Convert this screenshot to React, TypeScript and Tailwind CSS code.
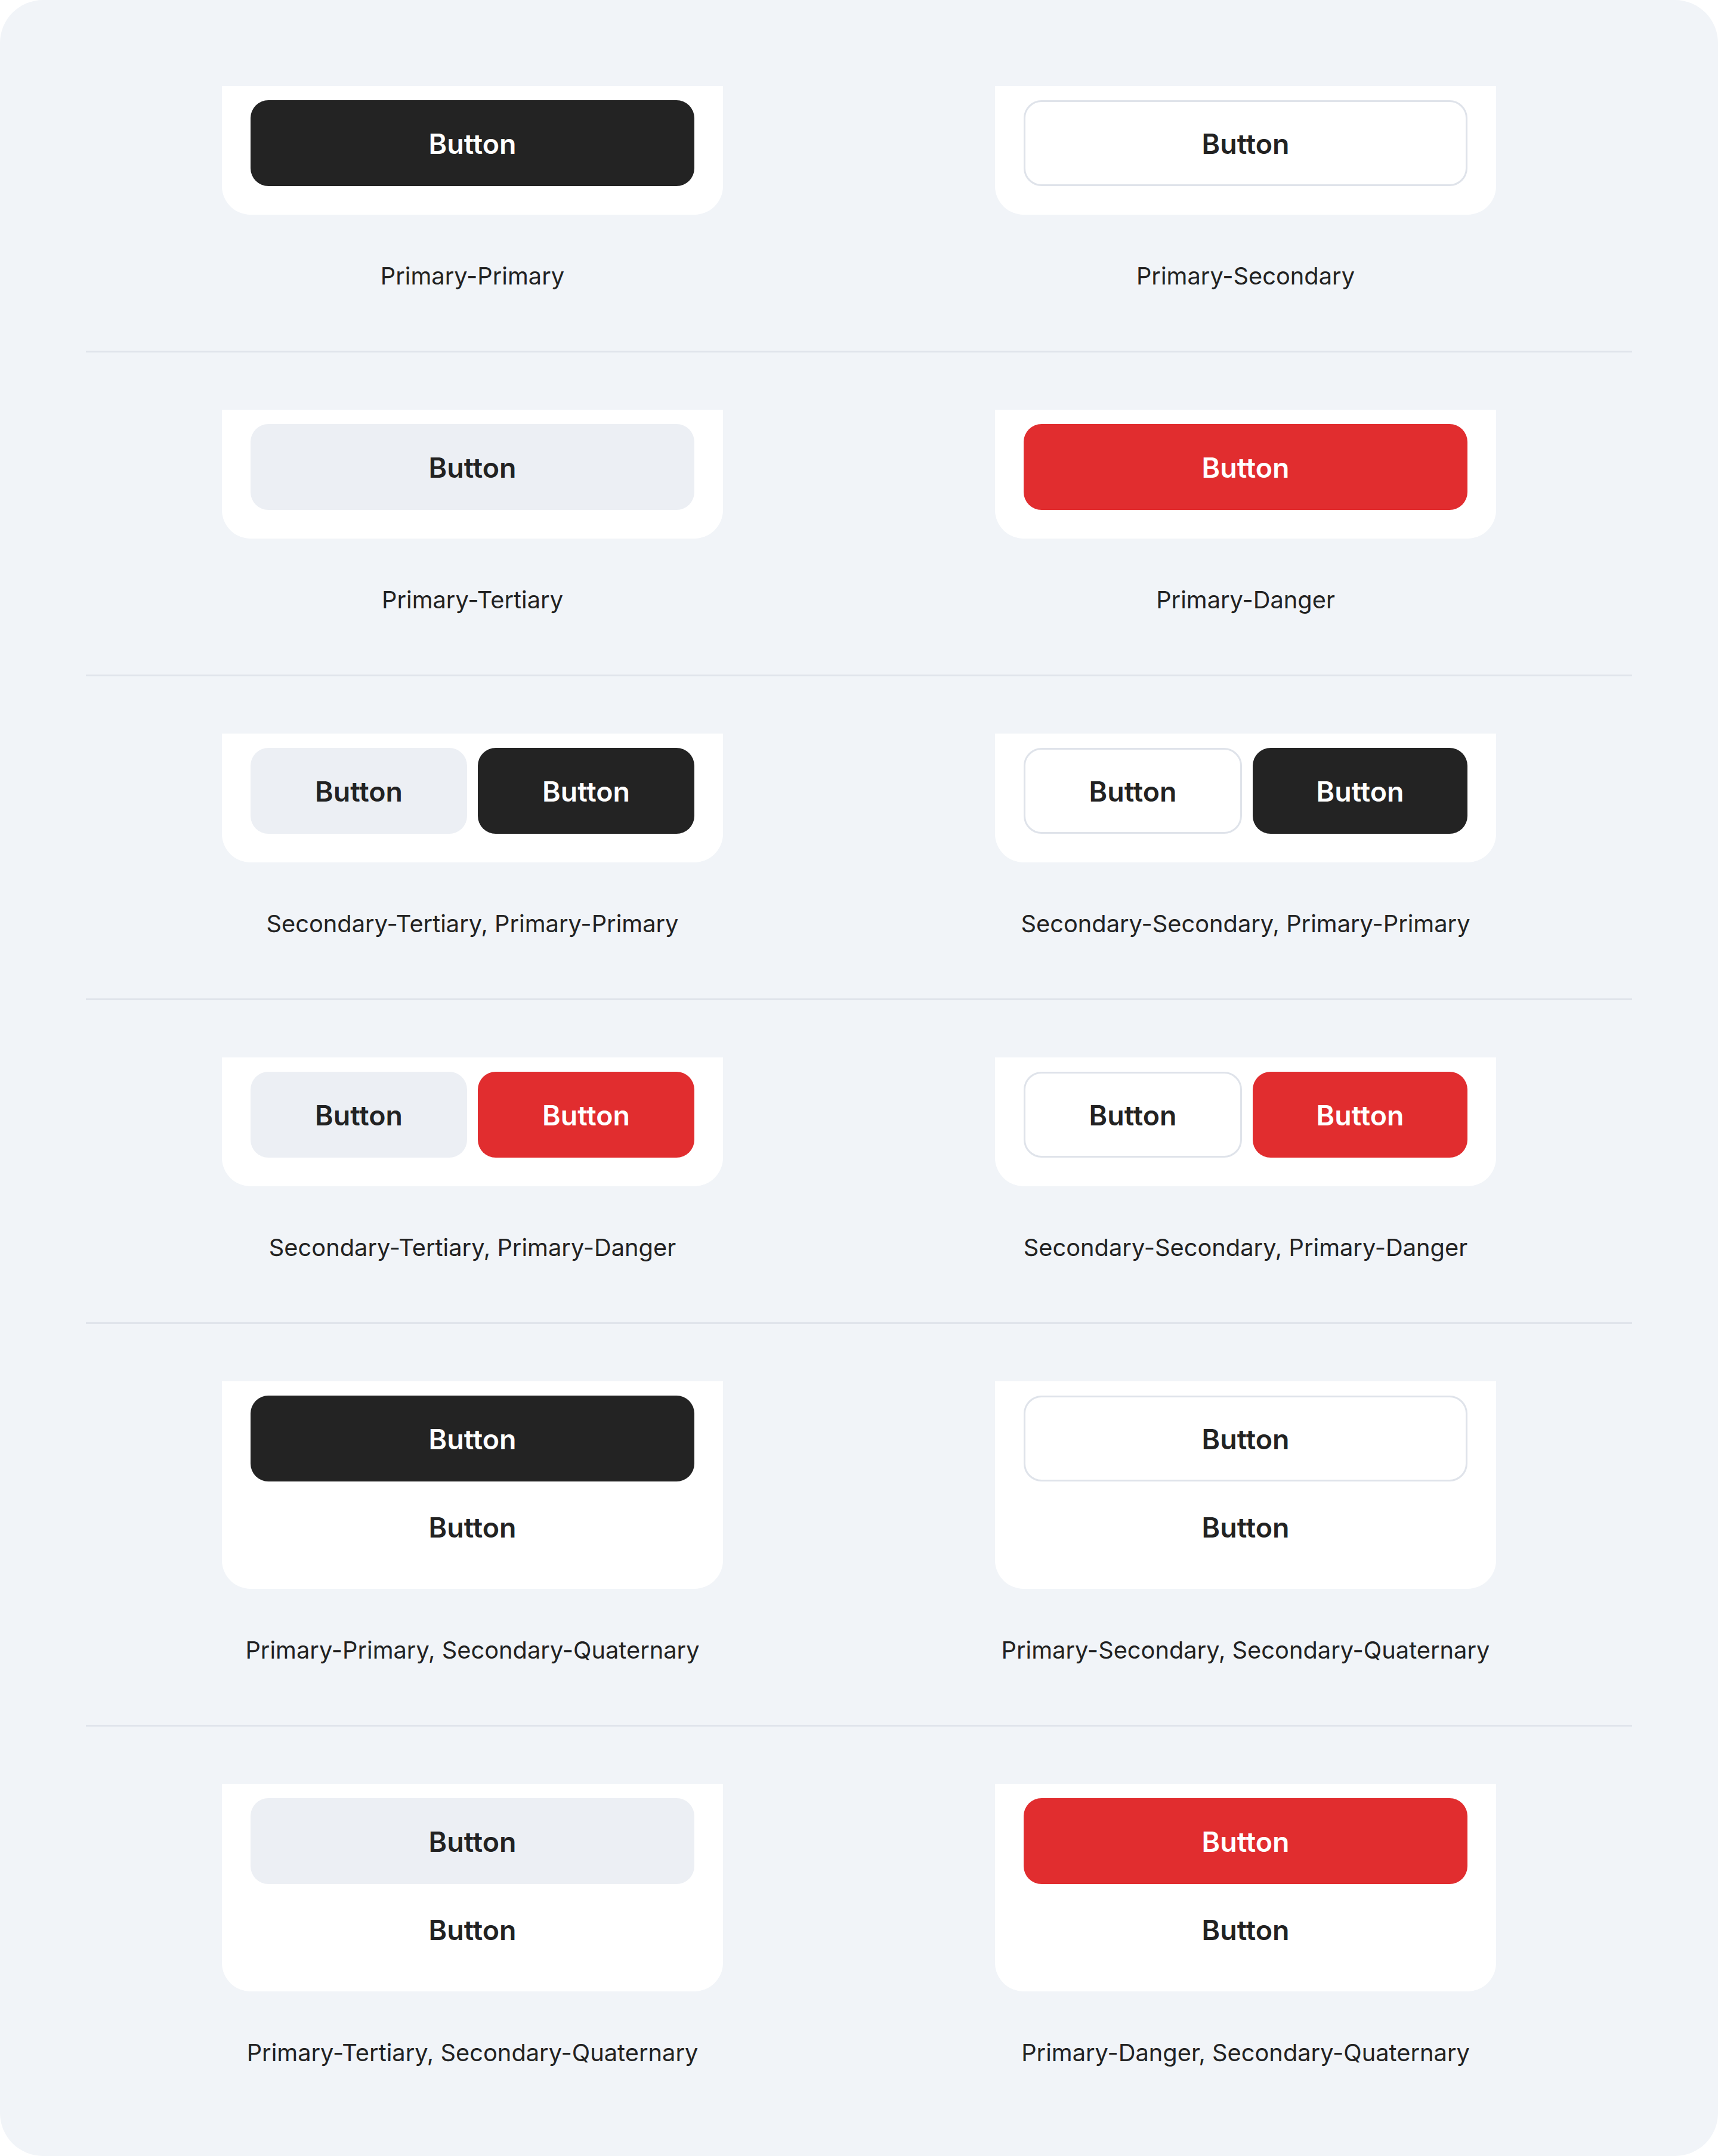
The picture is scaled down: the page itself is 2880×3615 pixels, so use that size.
type Variant = 'primary' | 'secondary' | 'tertiary' | 'danger' | 'quaternary';

const variantClass: Record<Variant, string> = {
  primary: 'bg-[#232323] text-white',
  secondary: 'bg-white text-[#222222] border-[3px] border-[#dfe3ea]',
  tertiary: 'bg-[#eceff4] text-[#222222]',
  danger: 'bg-[#e12d2f] text-white',
  quaternary: 'bg-transparent text-[#222222]',
};

function Btn({ variant, className = '' }: { variant: Variant; className?: string }) {
  return (
    <button
      className={`h-[144px] rounded-[30px] flex items-center justify-center pt-[3px] text-[46.5px] font-semibold ${variantClass[variant]} ${className}`}
    >
      Button
    </button>
  );
}

type Example = {
  label: string;
  layout: 'single' | 'row' | 'stack';
  buttons: Variant[];
};

const rows: Example[][] = [
  [
    { label: 'Primary-Primary', layout: 'single', buttons: ['primary'] },
    { label: 'Primary-Secondary', layout: 'single', buttons: ['secondary'] },
  ],
  [
    { label: 'Primary-Tertiary', layout: 'single', buttons: ['tertiary'] },
    { label: 'Primary-Danger', layout: 'single', buttons: ['danger'] },
  ],
  [
    { label: 'Secondary-Tertiary, Primary-Primary', layout: 'row', buttons: ['tertiary', 'primary'] },
    { label: 'Secondary-Secondary, Primary-Primary', layout: 'row', buttons: ['secondary', 'primary'] },
  ],
  [
    { label: 'Secondary-Tertiary, Primary-Danger', layout: 'row', buttons: ['tertiary', 'danger'] },
    { label: 'Secondary-Secondary, Primary-Danger', layout: 'row', buttons: ['secondary', 'danger'] },
  ],
  [
    { label: 'Primary-Primary, Secondary-Quaternary', layout: 'stack', buttons: ['primary', 'quaternary'] },
    { label: 'Primary-Secondary, Secondary-Quaternary', layout: 'stack', buttons: ['secondary', 'quaternary'] },
  ],
  [
    { label: 'Primary-Tertiary, Secondary-Quaternary', layout: 'stack', buttons: ['tertiary', 'quaternary'] },
    { label: 'Primary-Danger, Secondary-Quaternary', layout: 'stack', buttons: ['danger', 'quaternary'] },
  ],
];

function Card({ example }: { example: Example }) {
  if (example.layout === 'row') {
    return (
      <div className="w-[840px] bg-white rounded-b-[48px] px-[48px] pt-[24px] pb-[48px] flex gap-[18px]">
        {example.buttons.map((v, i) => (
          <Btn key={i} variant={v} className="flex-1" />
        ))}
      </div>
    );
  }
  if (example.layout === 'stack') {
    return (
      <div className="w-[840px] bg-white rounded-b-[48px] px-[48px] pt-[24px] pb-[32px] flex flex-col gap-[4px]">
        {example.buttons.map((v, i) => (
          <Btn key={i} variant={v} className="w-full" />
        ))}
      </div>
    );
  }
  return (
    <div className="w-[840px] bg-white rounded-b-[48px] px-[48px] pt-[24px] pb-[48px] flex">
      <Btn variant={example.buttons[0]} className="w-full" />
    </div>
  );
}

export default function App() {
  return (
    <div className="w-[2880px] h-[3615px] bg-white" style={{ fontFamily: 'Inter, "Noto Sans", sans-serif' }}>
      <div className="h-full bg-[#f1f4f8] rounded-[72px] px-[144px] py-[48px]">
        {rows.map((row, r) => (
          <div
            key={r}
            className={`grid grid-cols-2 pt-[96px] pb-[95px] ${r < rows.length - 1 ? 'border-b-[3px] border-[#e0e4eb]' : ''}`}
          >
            {row.map((ex) => (
              <div key={ex.label} className="flex flex-col items-center">
                <Card example={ex} />
                <div className="mt-[73px] text-[39.8px] leading-[60px] text-[#222222]">{ex.label}</div>
              </div>
            ))}
          </div>
        ))}
      </div>
    </div>
  );
}
